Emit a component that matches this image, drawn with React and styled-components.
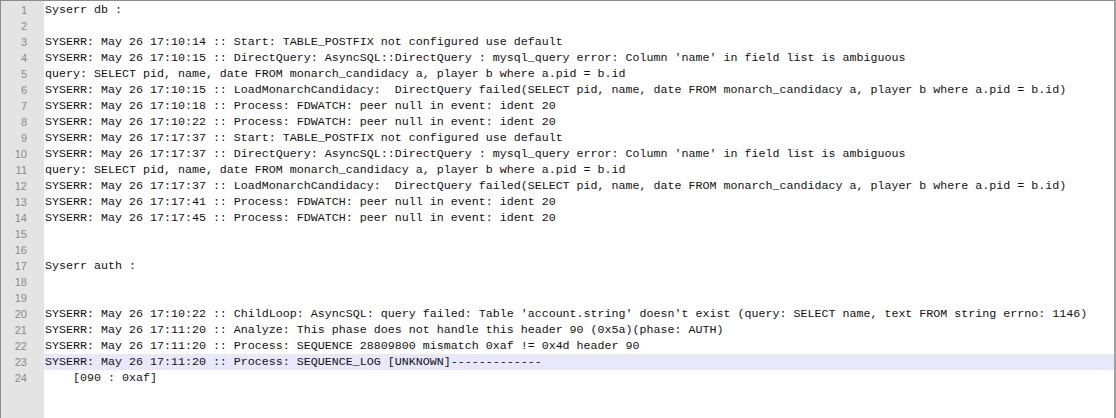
import React from "react";
import styled, { createGlobalStyle } from "styled-components";

const Global = createGlobalStyle`
  html, body { margin: 0; padding: 0; background: #fff; }
  body { width: 1116px; height: 418px; overflow: hidden; }
`;

const Editor = styled.div`
  box-sizing: border-box;
  width: 1116px;
  height: 418px;
  display: flex;
  border-top: 1px solid #8c8c8c;
  border-left: 1px solid #8c8c8c;
  border-right: 2px solid #a0a0a0;
  padding-top: 1px;
  background: #fff;
  font-family: "Liberation Mono", "Courier New", monospace;
  font-size: 11.67px;
  overflow: hidden;
`;

const Gutter = styled.div`
  width: 43px;
  flex: none;
  background: #e4e4e4;
  display: flex;
  flex-direction: column;
  margin-top: -1px;
  padding-top: 1px;
`;

const Num = styled.div`
  height: 16px;
  line-height: 16px;
  text-align: right;
  padding-right: 17px;
  color: #8a8a8a;
  font-family: "Liberation Sans", Arial, sans-serif;
  font-size: 11px;
`;

const Code = styled.div`
  flex: 1;
  display: flex;
  flex-direction: column;
`;

const Line = styled.div`
  height: 16px;
  line-height: 16px;
  padding-left: 1px;
  white-space: pre;
  color: #111;
  background: ${(p) => (p.$active ? "#e8e8fa" : "transparent")};
`;

const lines = [
  "Syserr db :",
  "",
  "SYSERR: May 26 17:10:14 :: Start: TABLE_POSTFIX not configured use default",
  "SYSERR: May 26 17:10:15 :: DirectQuery: AsyncSQL::DirectQuery : mysql_query error: Column 'name' in field list is ambiguous",
  "query: SELECT pid, name, date FROM monarch_candidacy a, player b where a.pid = b.id",
  "SYSERR: May 26 17:10:15 :: LoadMonarchCandidacy:  DirectQuery failed(SELECT pid, name, date FROM monarch_candidacy a, player b where a.pid = b.id)",
  "SYSERR: May 26 17:10:18 :: Process: FDWATCH: peer null in event: ident 20",
  "SYSERR: May 26 17:10:22 :: Process: FDWATCH: peer null in event: ident 20",
  "SYSERR: May 26 17:17:37 :: Start: TABLE_POSTFIX not configured use default",
  "SYSERR: May 26 17:17:37 :: DirectQuery: AsyncSQL::DirectQuery : mysql_query error: Column 'name' in field list is ambiguous",
  "query: SELECT pid, name, date FROM monarch_candidacy a, player b where a.pid = b.id",
  "SYSERR: May 26 17:17:37 :: LoadMonarchCandidacy:  DirectQuery failed(SELECT pid, name, date FROM monarch_candidacy a, player b where a.pid = b.id)",
  "SYSERR: May 26 17:17:41 :: Process: FDWATCH: peer null in event: ident 20",
  "SYSERR: May 26 17:17:45 :: Process: FDWATCH: peer null in event: ident 20",
  "",
  "",
  "Syserr auth :",
  "",
  "",
  "SYSERR: May 26 17:10:22 :: ChildLoop: AsyncSQL: query failed: Table 'account.string' doesn't exist (query: SELECT name, text FROM string errno: 1146)",
  "SYSERR: May 26 17:11:20 :: Analyze: This phase does not handle this header 90 (0x5a)(phase: AUTH)",
  "SYSERR: May 26 17:11:20 :: Process: SEQUENCE 28809800 mismatch 0xaf != 0x4d header 90",
  "SYSERR: May 26 17:11:20 :: Process: SEQUENCE_LOG [UNKNOWN]-------------",
  "    [090 : 0xaf]",
];

export default function App() {
  return (
    <>
      <Global />
      <Editor>
        <Gutter>
          {lines.map((_, i) => (
            <Num key={i}>{i + 1}</Num>
          ))}
        </Gutter>
        <Code>
          {lines.map((l, i) => (
            <Line key={i} $active={i === 22}>
              {l}
            </Line>
          ))}
        </Code>
      </Editor>
    </>
  );
}
